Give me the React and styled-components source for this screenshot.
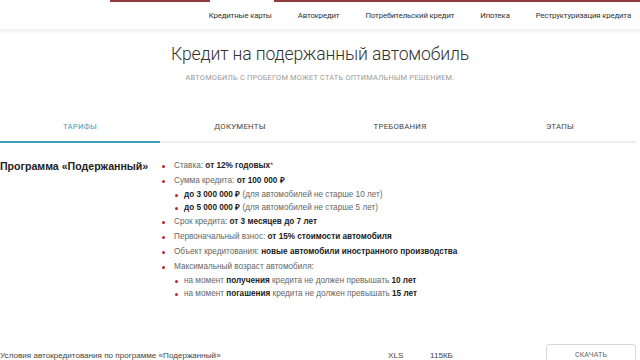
import React from "react";
import styled, { createGlobalStyle } from "styled-components";

const Global = createGlobalStyle`
  html, body { margin: 0; padding: 0; background: #fff; }
  body { width: 640px; height: 360px; overflow: hidden; font-family: "Liberation Sans", Arial, sans-serif; }
  * { box-sizing: border-box; }
`;

const Page = styled.div`
  width: 640px;
  height: 360px;
  overflow: hidden;
  display: flex;
  flex-direction: column;
`;

const TopStrip = styled.div`
  height: 2px;
  display: flex;
`;

const StripSeg = styled.div`
  height: 2px;
  width: ${p => p.w}px;
  margin-left: ${p => p.ml}px;
  background: #8e3b3c;
`;

const NavBar = styled.nav`
  height: 28px;
  display: flex;
  justify-content: flex-end;
  align-items: center;
  padding-right: 9px;
  box-shadow: 0 2px 3px rgba(0,0,0,0.06);
  border-bottom: 1px solid #f0f0f0;
`;

const NavItem = styled.a`
  font-family: Roboto, "Liberation Sans", sans-serif;
  font-size: 7.8px;
  letter-spacing: -0.15px;
  color: #333;
  margin-left: ${p => p.gap}px;
  white-space: nowrap;
`;

const Hero = styled.header`
  display: flex;
  flex-direction: column;
  align-items: center;
  padding-top: 12px;
`;

const Title = styled.h1`
  margin: 0;
  font-family: Roboto, "Open Sans", sans-serif;
  font-weight: 300;
  font-size: 17.6px;
  letter-spacing: -0.15px;
  line-height: 24px;
  color: #333;
`;

const Subtitle = styled.p`
  margin: 7px 0 0;
  font-family: Roboto, sans-serif;
  font-size: 7.4px;
  letter-spacing: 0.22px;
  text-transform: uppercase;
  color: #9a9a9a;
`;

const Tabs = styled.div`
  margin-top: 29px;
  display: grid;
  grid-template-columns: repeat(4, 160px);
  width: 636px;
  border-bottom: 2px solid #ececec;
`;

const Tab = styled.div`
  height: 32px;
  display: flex;
  align-items: center;
  justify-content: center;
  font-family: Roboto, sans-serif;
  font-size: 7.8px;
  letter-spacing: 0.25px;
  text-transform: uppercase;
  color: ${p => (p.active ? "#3ba2b8" : "#444")};
  margin-bottom: -2px;
  border-bottom: 2px solid ${p => (p.active ? "#3a9fb3" : "transparent")};
`;

const Content = styled.section`
  display: grid;
  grid-template-columns: 162px 1fr;
  padding-top: 15px;
`;

const ProgramTitle = styled.h2`
  margin: 0;
  font-family: "Liberation Sans", Arial, sans-serif;
  font-weight: bold;
  font-size: 10.6px;
  line-height: 15px;
  color: #222;
  white-space: nowrap;
  padding-top: 1px;
`;

const List = styled.ul`
  list-style: none;
  margin: 0;
  padding: 0;
  font-family: "Liberation Sans", Arial, sans-serif;
  font-size: 8.2px;
  color: #666;
`;

const Item = styled.li`
  position: relative;
  padding-left: ${p => (p.sub ? 10 : 12)}px;
  line-height: ${p => (p.sub ? 13 : 15)}px;
  white-space: nowrap;
  &::before {
    content: "";
    position: absolute;
    left: ${p => (p.sub ? 1 : 0)}px;
    top: ${p => (p.sub ? 5.5 : 6.5)}px;
    width: 3px;
    height: 3px;
    border-radius: 50%;
    background: #c2262e;
  }
  b { color: #222; }
`;

const FileRow = styled.div`
  margin-top: auto;
  display: flex;
  align-items: flex-start;
  height: 16px;
  font-family: "Liberation Sans", Arial, sans-serif;
  font-size: 8.1px;
  color: #444;
`;

const FileName = styled.span`
  width: 388px;
  padding-top: 7px;
`;

const FileMeta = styled.span`
  width: ${p => p.w}px;
  padding-top: 7px;
`;

const Download = styled.button`
  margin-left: 40px;
  width: 90px;
  height: 26px;
  border: 1px solid #d8d8d8;
  border-radius: 3px;
  background: #fff;
  font-family: Roboto, sans-serif;
  font-size: 7.2px;
  color: #666;
  text-transform: uppercase;
  padding: 0;
  padding-bottom: 6px;
`;

export default function App() {
  return (
    <Page>
      <Global />
      <TopStrip>
        <StripSeg ml={110} w={100} />
        <StripSeg ml={64} w={366} />
      </TopStrip>
      <NavBar>
        <NavItem gap={0}>Кредитные карты</NavItem>
        <NavItem gap={26}>Автокредит</NavItem>
        <NavItem gap={26}>Потребительский кредит</NavItem>
        <NavItem gap={26}>Ипотека</NavItem>
        <NavItem gap={26}>Реструктуризация кредита</NavItem>
      </NavBar>
      <Hero>
        <Title>Кредит на подержанный автомобиль</Title>
        <Subtitle>Автомобиль с пробегом может стать оптимальным решением.</Subtitle>
      </Hero>
      <Tabs>
        <Tab active>Тарифы</Tab>
        <Tab>Документы</Tab>
        <Tab>Требования</Tab>
        <Tab>Этапы</Tab>
      </Tabs>
      <Content>
        <ProgramTitle>Программа «Подержанный»</ProgramTitle>
        <List>
          <Item>Ставка: <b>от 12% годовых</b>*</Item>
          <Item>
            Сумма кредита: <b>от 100 000 ₽</b>
            <List>
              <Item sub><b>до 3 000 000 ₽</b> (для автомобилей не старше 10 лет)</Item>
              <Item sub><b>до 5 000 000 ₽</b> (для автомобилей не старше 5 лет)</Item>
            </List>
          </Item>
          <Item>Срок кредита: <b>от 3 месяцев до 7 лет</b></Item>
          <Item>Первоначальный взнос: <b>от 15% стоимости автомобиля</b></Item>
          <Item>Объект кредитования: <b>новые автомобили иностранного производства</b></Item>
          <Item>
            Максимальный возраст автомобиля:
            <List>
              <Item sub>на момент <b>получения</b> кредита не должен превышать <b>10 лет</b></Item>
              <Item sub>на момент <b>погашения</b> кредита не должен превышать <b>15 лет</b></Item>
            </List>
          </Item>
        </List>
      </Content>
      <FileRow>
        <FileName>Условия автокредитования по программе «Подержанный»</FileName>
        <FileMeta w={42}>XLS</FileMeta>
        <FileMeta w={76}>115КБ</FileMeta>
        <Download>Скачать</Download>
      </FileRow>
    </Page>
  );
}
